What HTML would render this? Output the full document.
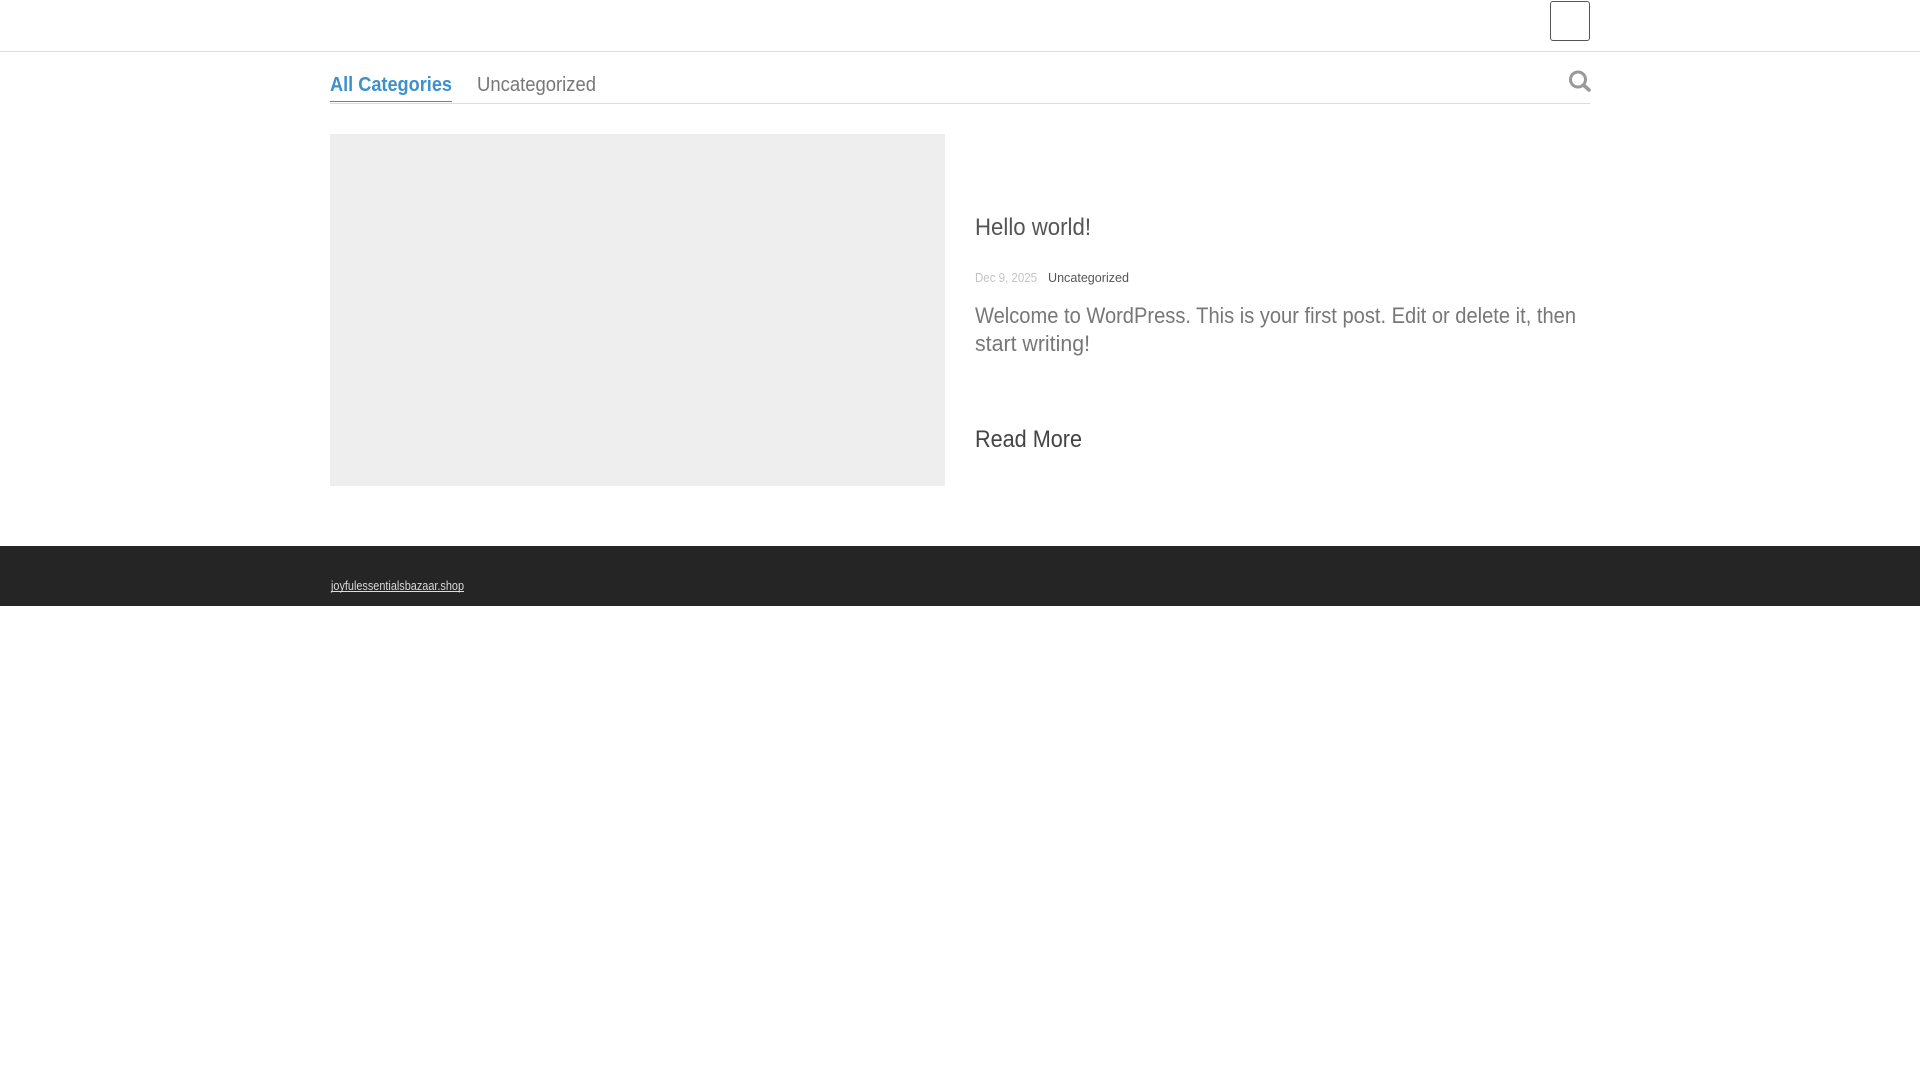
<!DOCTYPE html>
<html lang="en">
<head>
<meta charset="utf-8">
<title>joyfulessentialsbazaar.shop</title>
<style>
html,body{margin:0;padding:0;background:#fff;width:1920px;height:1080px;overflow:hidden}
body{position:relative;font-family:"Liberation Sans",sans-serif}
.box{position:absolute;box-sizing:border-box}
svg{position:absolute;left:0;top:0}
</style>
</head>
<body>
<div class="box" style="left:0;top:51px;width:1920px;height:1px;background:#dcdcdc"></div>
<div class="box" style="left:1550px;top:1px;width:40px;height:40px;border:1.5px solid #555;border-radius:3px"></div>
<div class="box" style="left:330px;top:103px;width:1260px;height:1px;background:#dcdcdc"></div>
<div class="box" style="left:330px;top:101px;width:122px;height:1px;background:#3d90cc"></div>
<div class="box" style="left:330px;top:134px;width:615px;height:352px;background:#eeeeee"></div>
<div class="box" style="left:0;top:546px;width:1920px;height:60px;background:#252525"></div>
<svg width="1920" height="1080" viewBox="0 0 1920 1080" font-family="'Liberation Sans',sans-serif">
  <text x="330" y="91" font-size="20" font-weight="700" fill="#3d90cc" textLength="122" lengthAdjust="spacingAndGlyphs">All Categories</text>
  <text x="477" y="91" font-size="20" fill="#777" textLength="119" lengthAdjust="spacingAndGlyphs">Uncategorized</text>
  <g fill="none" stroke="#999" stroke-width="3">
    <circle cx="1578" cy="79.5" r="7.5"/>
    <path d="M1583.5 85L1589 90" stroke-width="3.6" stroke-linecap="round"/>
  </g>
  <text x="975" y="235" font-size="24" fill="#555" textLength="116" lengthAdjust="spacingAndGlyphs">Hello world!</text>
  <text x="975" y="282" font-size="13" fill="#c4c4c4" textLength="62" lengthAdjust="spacingAndGlyphs">Dec 9, 2025</text>
  <text x="1048" y="282" font-size="13" fill="#555" textLength="81" lengthAdjust="spacingAndGlyphs">Uncategorized</text>
  <text x="975" y="323" font-size="22" fill="#777" textLength="601" lengthAdjust="spacingAndGlyphs">Welcome to WordPress. This is your first post. Edit or delete it, then</text>
  <text x="975" y="351" font-size="22" fill="#777" textLength="115" lengthAdjust="spacingAndGlyphs">start writing!</text>
  <text x="975" y="447" font-size="24" fill="#444" textLength="107" lengthAdjust="spacingAndGlyphs">Read More</text>
  <text x="331" y="590" font-size="12.5" fill="#d8d8d8" textLength="133" lengthAdjust="spacingAndGlyphs">joyfulessentialsbazaar.shop</text>
</svg>
<div class="box" style="left:331px;top:591px;width:133px;height:1px;background:#ddd"></div>
</body>
</html>
